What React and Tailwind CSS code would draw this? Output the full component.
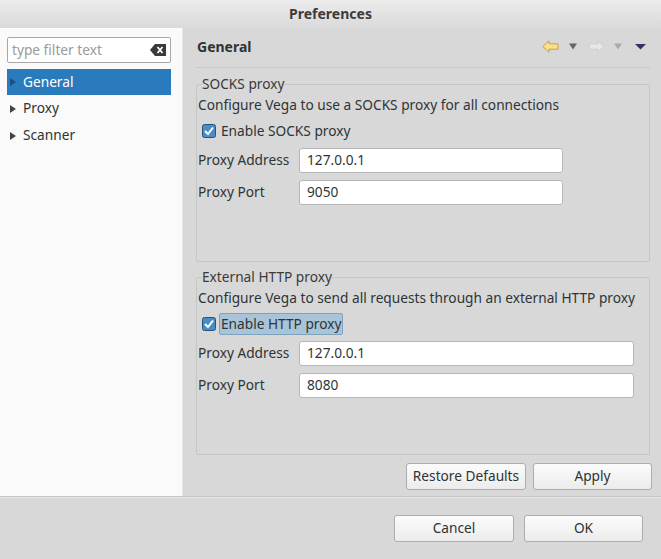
import React from "react";

const font = { fontFamily: '"Noto Sans", "Open Sans", sans-serif' };

function Tri({ color = "#444" }) {
  return (
    <svg width="6" height="8" viewBox="0 0 6 8" className="shrink-0">
      <path d="M0 0 L6 4 L0 8 Z" fill={color} />
    </svg>
  );
}

function Check() {
  return (
    <svg width="14" height="14" viewBox="0 0 14 14" className="shrink-0">
      <rect x="0.5" y="0.5" width="13" height="13" rx="2" fill="#4a8cc4" stroke="#23547e" />
      <path d="M3 7 L6 10 L11 3.5" stroke="#fff" strokeWidth="2" fill="none" />
    </svg>
  );
}

function Input({ value, w }) {
  return (
    <div
      className={`h-[25px] ${w} bg-white border border-[#b6b6b6] rounded-[3px] flex items-center px-[7px] text-[13.7px] text-[#2e3436]`}
    >
      {value}
    </div>
  );
}

function Group({ title, desc, check, highlight, w }) {
  return (
    <fieldset className="border border-[#c6c6c6] rounded-[2px] px-[1px] pb-0 h-[187px] flex flex-col">
      <legend className="ml-[4px] px-[0px] text-[13.7px] leading-[18px] text-[#3a3a3a]">{title}</legend>
      <div className="text-[13.7px] leading-[20px] mt-[2px]">{desc}</div>
      <div className="flex items-center h-[22px] mt-[5px] pl-[4px] gap-[3px]">
        <Check />
        <span
          className={
            highlight
              ? "text-[13.7px] leading-[20px] px-[1px] bg-[#a9c4d8] border border-[#7fa3bf] rounded-[2px]"
              : "text-[13.7px] leading-[20px] px-[2px]"
          }
        >
          {check}
        </span>
      </div>
      <div className="flex items-center mt-[6px]">
        <span className="w-[101px] text-[13.7px]">Proxy Address</span>
        <Input value="127.0.0.1" w={w} />
      </div>
      <div className="flex items-center mt-[7px]">
        <span className="w-[101px] text-[13.7px]">Proxy Port</span>
        <Input value={check.includes("SOCKS") ? "9050" : "8080"} w={w} />
      </div>
    </fieldset>
  );
}

function Btn({ children, w = "w-[120px]" }) {
  return (
    <div
      className={`${w} h-[27px] flex items-center justify-center text-[13.7px] text-[#2e3436] border border-[#adadad] rounded-[3px] bg-gradient-to-b from-[#fbfbfb] to-[#ececec]`}
    >
      {children}
    </div>
  );
}

function NavIcons() {
  return (
    <div className="flex items-center">
      <svg width="17" height="13" viewBox="0 0 17 13" className="mr-[10px]">
        <path d="M0.8 6.5 L7 0.8 L7 3.8 L16 3.8 L16 9.2 L7 9.2 L7 12.2 Z" fill="#fbe08a" stroke="#caa23c" strokeWidth="1" />
      </svg>
      <svg width="8" height="7" viewBox="0 0 8 7" className="mr-[11px]">
        <path d="M0 0.5 L8 0.5 L4 6.5 Z" fill="#666" />
      </svg>
      <svg width="17" height="13" viewBox="0 0 17 13" className="mr-[9px]">
        <path d="M16.2 6.5 L10 0.8 L10 3.8 L1 3.8 L1 9.2 L10 9.2 L10 12.2 Z" fill="#e6e6e6" stroke="#cccccc" strokeWidth="1" />
      </svg>
      <svg width="8" height="7" viewBox="0 0 8 7" className="mr-[13px]">
        <path d="M0 0.5 L8 0.5 L4 6.5 Z" fill="#aaa" />
      </svg>
      <svg width="11" height="7" viewBox="0 0 11 7">
        <path d="M0 1 L11 1 L5.5 6.5 Z" fill="#2f3560" />
      </svg>
    </div>
  );
}

export default function App() {
  return (
    <div style={font} className="w-[661px] h-[559px] flex flex-col bg-[#d8d8d8] text-[#2e3436] overflow-hidden">
      <div className="h-[28px] shrink-0 flex items-center justify-center bg-gradient-to-b from-[#ececec] to-[#dadada] text-[14px] font-bold text-[#3c3c3c] pb-[1px]">
        Preferences
      </div>
      <div className="flex h-[468px] shrink-0">
        <div className="w-[183px] shrink-0 bg-[#fafafa] border-r border-[#e8e8e8] pt-[9px] pl-[7px] pr-[11px]">
          <div className="h-[26px] border border-[#a8a8a8] rounded-[2px] bg-white flex items-center pl-[4px] pr-[4px]">
            <span className="flex-1 text-[13.7px] text-[#9a9a9a]">type filter text</span>
            <svg width="16" height="12" viewBox="0 0 16 12">
              <path d="M5 0 L16 0 L16 12 L5 12 L0 6 Z" fill="#3a3a3a" />
              <path d="M7.5 3 L12.5 9 M12.5 3 L7.5 9" stroke="#fff" strokeWidth="1.8" />
            </svg>
          </div>
          <div className="mt-[6px] h-[26px] bg-[#2a7bbd] flex items-center pl-[3px] gap-[7px] text-white text-[13.7px]">
            <Tri color="#1d4f7a" />
            <span>General</span>
          </div>
          <div className="h-[27px] flex items-center pl-[3px] gap-[7px] text-[13.7px]">
            <Tri />
            <span>Proxy</span>
          </div>
          <div className="h-[27px] flex items-center pl-[3px] gap-[7px] text-[13.7px]">
            <Tri />
            <span>Scanner</span>
          </div>
        </div>
        <div className="flex-1 flex flex-col pl-[13px] pr-[9px]">
          <div className="h-[40px] flex items-center justify-between border-b border-[#c8c8c8] pl-[1px] pr-[4px] mr-[2px] pb-[2px]">
            <span className="text-[14px] font-bold text-[#2e3436]">General</span>
            <NavIcons />
          </div>
          <div className="mt-[7px] mr-[2px] flex flex-col gap-[6px]">
            <Group
              title="SOCKS proxy"
              desc="Configure Vega to use a SOCKS proxy for all connections"
              check="Enable SOCKS proxy"
              w="w-[264px]"
            />
            <Group
              title="External HTTP proxy"
              desc="Configure Vega to send all requests through an external HTTP proxy"
              check="Enable HTTP proxy"
              highlight
              w="w-[335px]"
            />
          </div>
          <div className="flex justify-end gap-[7px] mt-[8px]">
            <Btn>Restore Defaults</Btn>
            <Btn w="w-[119px]">Apply</Btn>
          </div>
        </div>
      </div>
      <div className="h-[2px] border-t border-[#c4c4c4] bg-[#e6e6e6]" />
      <div className="flex justify-end gap-[10px] pr-[18px] pt-[17px]">
        <Btn>Cancel</Btn>
        <Btn w="w-[119px]">OK</Btn>
      </div>
    </div>
  );
}
